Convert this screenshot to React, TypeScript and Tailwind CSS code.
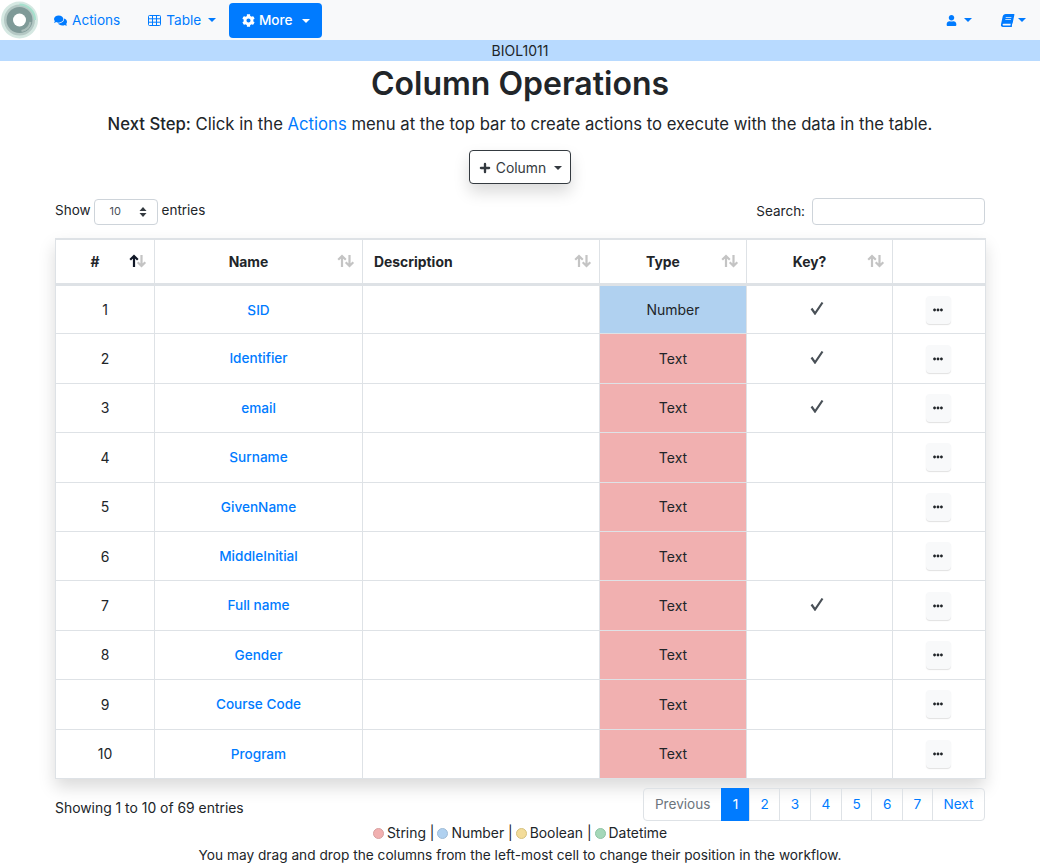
import { Plus } from "lucide-react";
import { FaComments, FaCog, FaUser, FaBook, FaEllipsisH } from "react-icons/fa";

const ROWS = [
  { n: 1, name: "SID", type: "Number", key: true },
  { n: 2, name: "Identifier", type: "Text", key: true },
  { n: 3, name: "email", type: "Text", key: true },
  { n: 4, name: "Surname", type: "Text", key: false },
  { n: 5, name: "GivenName", type: "Text", key: false },
  { n: 6, name: "MiddleInitial", type: "Text", key: false },
  { n: 7, name: "Full name", type: "Text", key: true },
  { n: 8, name: "Gender", type: "Text", key: false },
  { n: 9, name: "Course Code", type: "Text", key: false },
  { n: 10, name: "Program", type: "Text", key: false },
];

const Caret = ({ className = "" }: { className?: string }) => (
  <span className={`inline-block h-0 w-0 border-x-[4.5px] border-t-[4.5px] border-x-transparent border-t-current ${className}`} />
);

// DataTables-style double arrow; "up" darkens the first arrow for the sorted column
function SortArrows({ active = false }: { active?: boolean }) {
  return (
    <svg width="18" height="14" viewBox="0 0 18 14" className="absolute right-[7px] top-[14px]" fill="none" strokeWidth="2.2">
      <path d="M5 13V2M1.2 5.8 5 2l3.8 3.8" stroke={active ? "#111827" : "#c4c4c4"} />
      <path d="M12.5 1v11M8.7 8.2l3.8 3.8 3.8-3.8" stroke="#c4c4c4" />
    </svg>
  );
}

function Logo() {
  return (
    <svg width="40" height="40" viewBox="0 0 40 40" className="shrink-0 bg-white">
      <circle cx="19.5" cy="20" r="18.5" fill="#d5e8e2" />
      <circle cx="19.5" cy="20" r="15.5" fill="#b4c8c4" />
      <circle cx="19.5" cy="20" r="13" fill="#7f9a98" />
      <path d="M19.5 4.5a15.5 15.5 0 0 1 15.5 15.5" stroke="#a6e0cd" strokeWidth="2" fill="none" />
      <path d="M30.5 22a11 11 0 0 1-9 9" stroke="#a9bdb9" strokeWidth="2" fill="none" />
      <circle cx="19.5" cy="20" r="6.5" fill="#fff" />
    </svg>
  );
}

// outlined grid, the reference has no solid header band
function TableIcon() {
  return (
    <svg width="13" height="11" viewBox="0 0 13 11" fill="none" stroke="currentColor" strokeWidth="1">
      <rect x="0.5" y="0.5" width="12" height="10" rx="1" />
      <path d="M0.5 3.8h12M0.5 7.2h12M4.5 0.5v10M8.5 0.5v10" />
    </svg>
  );
}

function KeyCheck() {
  return (
    <svg width="14" height="14" viewBox="0 0 14 14" fill="none" className="mx-auto mb-[4px] -translate-x-[3px]">
      <path d="M1.5 7.5 5 12.5 12.5 1.5" stroke="#495057" strokeWidth="2.2" />
    </svg>
  );
}

function PageLink({ label, active = false, muted = false }: { label: string; active?: boolean; muted?: boolean }) {
  return (
    <span
      className={`-ml-px flex h-[33px] items-center border px-[10.6px] first:ml-0 first:rounded-l last:rounded-r ${
        active
          ? "border-[#007bff] bg-[#007bff] text-white"
          : muted
            ? "border-[#dee2e6] text-[#6c757d]"
            : "border-[#dee2e6] text-[#007bff]"
      }`}
    >
      {label}
    </span>
  );
}

export default function App() {
  return (
    <div className="h-[864px] overflow-hidden bg-white font-['Inter','Liberation_Sans',sans-serif] text-[14px] text-[#212529]">
      <nav className="flex h-10 items-center bg-[#f8f9fa] text-[13.6px] text-[#007bff]">
        <Logo />
        <a className="ml-[14px] flex items-center gap-[5px] pt-[1px]">
          <FaComments className="text-[13px]" /> Actions
        </a>
        <a className="ml-[28px] flex items-center gap-[5px] pt-[1px]">
          <TableIcon /> Table <Caret className="ml-[2px]" />
        </a>
        <a className="ml-[13px] flex h-[35px] w-[93px] items-center justify-center gap-[4px] rounded bg-[#007bff] pt-[1px] font-medium text-white">
          <FaCog className="text-[13px]" /> More <Caret className="ml-[5px]" />
        </a>
        <span className="ml-auto flex items-center gap-[7px]">
          <FaUser className="text-[11px]" /> <Caret />
        </span>
        <span className="mr-[14px] ml-[29px] flex items-center gap-[4px]">
          <FaBook className="-skew-x-12 text-[13px]" /> <Caret />
        </span>
      </nav>
      <div className="flex h-[21px] items-center justify-center bg-[#b8daff] text-[14px]">BIOL1011</div>
      <h1 className="mt-[3px] text-center text-[32px] leading-[40px] font-semibold">Column Operations</h1>
      <p className="mt-[8px] text-center text-[16.7px] leading-6">
        <span className="font-medium">Next Step:</span> Click in the <span className="text-[#007bff]">Actions</span> menu at
        the top bar to create actions to execute with the data in the table.
      </p>
      <div className="mt-[14px] flex justify-center">
        <button className="flex h-[34px] w-[102px] items-center justify-center gap-[4px] rounded border border-[#343a40] bg-white pt-[2px] text-[13.9px] text-[#343a40] shadow-[0_8px_16px_rgba(0,0,0,0.15)]">
          <Plus size={14} strokeWidth={4} /> Column <Caret className="ml-[4px]" />
        </button>
      </div>

      <div className="mx-[55px] mt-[14px] flex h-[27px] items-center justify-between text-[13.5px]">
        <div className="flex items-center">
          <span className="-mt-[2px]">Show</span>
          <span className="mr-[4px] ml-[3px] flex h-[26px] w-[64px] items-center justify-between rounded border border-[#ced4da] pr-[10px] pl-[15px] text-[11px] text-[#495057]">
            10
            <svg width="8" height="12" viewBox="0 0 8 12" fill="#343a40">
              <path d="M4 1 7.5 5h-7zM4 11 .5 7h7z" />
            </svg>
          </span>
          <span className="-mt-[2px]">entries</span>
        </div>
        <div className="flex items-center gap-[7px]">
          Search:
          <span className="h-[27px] w-[173px] rounded border border-[#ced4da]" />
        </div>
      </div>

      <div className="mx-[55px] mt-[13px] shadow-[0_8px_16px_rgba(0,0,0,0.15)]">
        <table className="w-[930px] table-fixed border-collapse text-[14px]">
          <colgroup>
            <col className="w-[99px]" />
            <col className="w-[208px]" />
            <col className="w-[237px]" />
            <col className="w-[147px]" />
            <col className="w-[146px]" />
            <col className="w-[93px]" />
          </colgroup>
          <thead>
            <tr className="h-[45.5px] border-t-2 border-b-[3px] border-[#dee2e6] text-[13.9px] font-bold">
              <th className="relative border border-t-2 border-b-[3px] border-[#dee2e6] pt-[2px] pr-[20px]">
                #<SortArrows active />
              </th>
              <th className="relative border border-t-2 border-b-[3px] border-[#dee2e6] pt-[2px] pr-[20px]">
                Name
                <SortArrows />
              </th>
              <th className="relative border border-t-2 border-b-[3px] border-[#dee2e6] pt-[2px] pl-[11px] text-left">
                Description
                <SortArrows />
              </th>
              <th className="relative border border-t-2 border-b-[3px] border-[#dee2e6] pt-[2px] pr-[20px]">
                Type
                <SortArrows />
              </th>
              <th className="relative border border-t-2 border-b-[3px] border-[#dee2e6] pt-[2px] pr-[20px]">
                Key?
                <SortArrows />
              </th>
              <th className="border border-t-2 border-b-[3px] border-[#dee2e6]" />
            </tr>
          </thead>
          <tbody>
            {ROWS.map((r) => (
              <tr key={r.n} className="h-[49.4px]">
                <td className="border border-[#dee2e6] text-center">{r.n}</td>
                <td className="border border-[#dee2e6] text-center text-[13.6px] font-medium text-[#007bff]">{r.name}</td>
                <td className="border border-[#dee2e6]" />
                <td className={`border border-[#dee2e6] text-center ${r.type === "Number" ? "bg-[#b0d1f0]" : "bg-[#f1b0b0]"}`}>
                  {r.type}
                </td>
                <td className="border border-[#dee2e6]">{r.key && <KeyCheck />}</td>
                <td className="border border-[#dee2e6]">
                  <span className="mx-auto flex h-[28px] w-[25px] -translate-x-[1px] items-center justify-center rounded-sm bg-[#f8f9fa] shadow-[0_1px_1px_rgba(0,0,0,0.12)]">
                    <FaEllipsisH className="text-[10px] text-[#212529]" />
                  </span>
                </td>
              </tr>
            ))}
          </tbody>
        </table>
      </div>

      <div className="mx-[55px] mt-[9px] flex h-[33px] items-start justify-between text-[13.9px]">
        <span className="mt-[10px]">Showing 1 to 10 of 69 entries</span>
        <div className="flex text-[13.6px]">
          <PageLink label="Previous" muted />
          <PageLink label="1" active />
          <PageLink label="2" />
          <PageLink label="3" />
          <PageLink label="4" />
          <PageLink label="5" />
          <PageLink label="6" />
          <PageLink label="7" />
          <PageLink label="Next" />
        </div>
      </div>

      <div className="mt-[3px] flex h-[20px] items-center justify-center gap-[3px] text-[13.9px]">
        <i className="h-[11px] w-[11px] rounded-full border border-[#d9a0a0] bg-[#f1b0b0]" /> String |{" "}
        <i className="h-[11px] w-[11px] rounded-full border border-[#a0bcd6] bg-[#b0d1f0]" /> Number |{" "}
        <i className="h-[11px] w-[11px] rounded-full border border-[#d6c27f] bg-[#f3dc9a]" /> Boolean |{" "}
        <i className="h-[11px] w-[11px] rounded-full border border-[#8fc4a4] bg-[#a5d8b9]" /> Datetime
      </div>
      <p className="mt-[1px] text-center text-[13.7px] leading-[20px]">
        You may drag and drop the columns from the left-most cell to change their position in the workflow.
      </p>
    </div>
  );
}
